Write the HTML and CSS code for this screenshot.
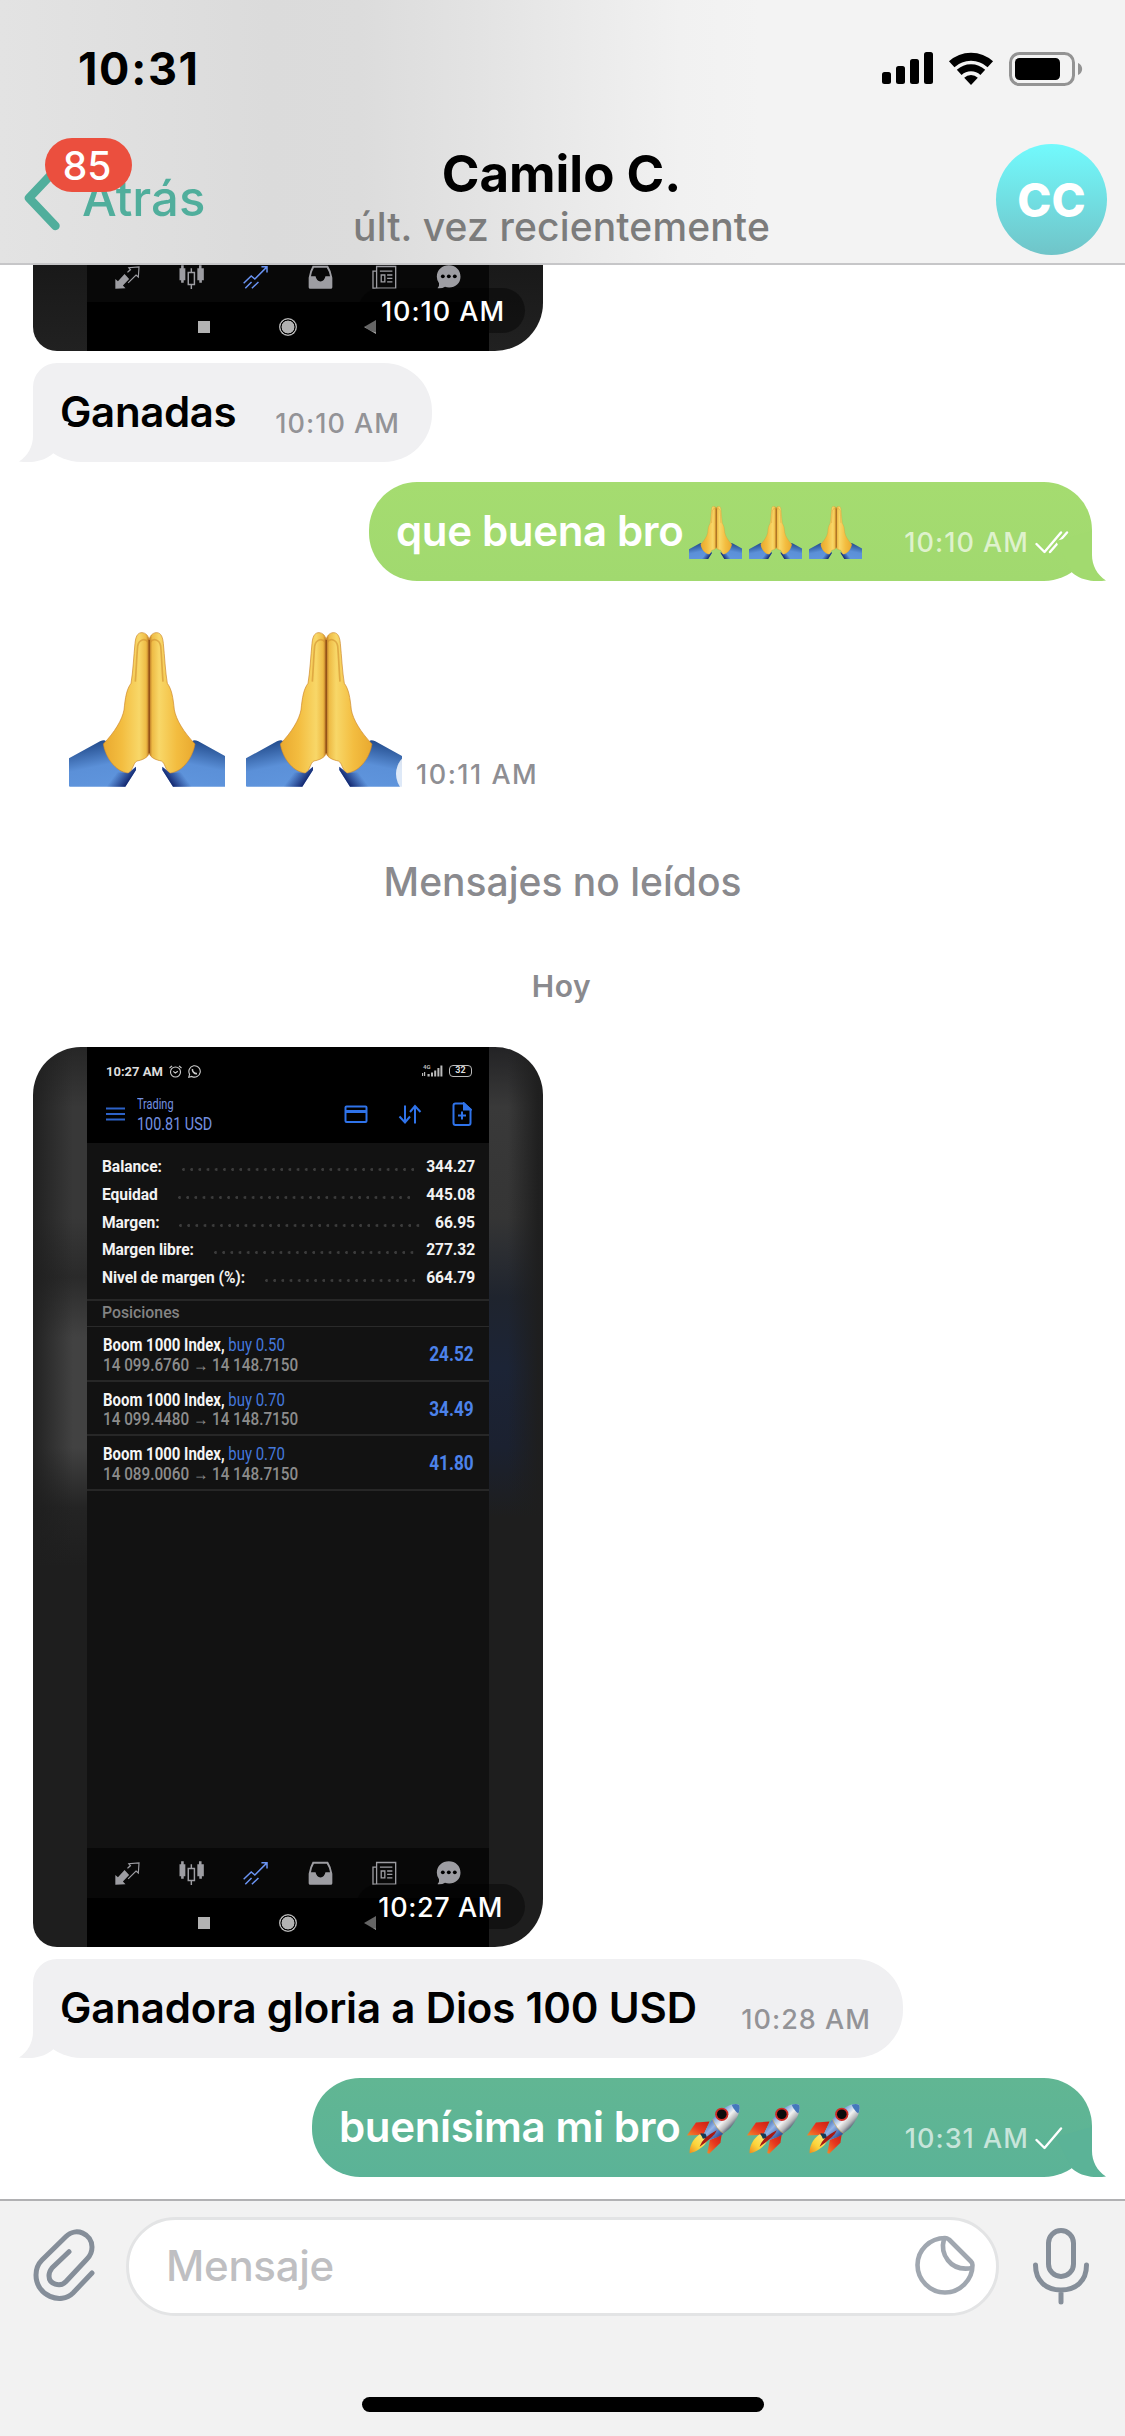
FILE: index.html
```html
<!DOCTYPE html>
<html lang="es">
<head>
<meta charset="utf-8">
<title>Camilo C.</title>
<link rel="stylesheet" href="styles.css">
</head>
<body>
<svg class="defs" width="0" height="0" aria-hidden="true">
  <defs>
    <linearGradient id="hand" x1="0" x2="1"><stop offset="0" stop-color="#e9a92f"/><stop offset=".4" stop-color="#f3bd40"/><stop offset=".78" stop-color="#f8d768"/><stop offset=".93" stop-color="#eebb45"/><stop offset="1" stop-color="#b0691f"/></linearGradient>
    <linearGradient id="cuff" x1=".3" y1="0" x2=".6" y2="1"><stop offset="0" stop-color="#1d4585"/><stop offset=".55" stop-color="#5b90d8"/><stop offset="1" stop-color="#5f95dd"/></linearGradient>
    <linearGradient id="cuffEnd" x1="0" y1="0" x2="1" y2=".45"><stop offset=".45" stop-color="#0a1f6b" stop-opacity="0"/><stop offset="1" stop-color="#07155c"/></linearGradient>
    <linearGradient id="hull" gradientUnits="userSpaceOnUse" x1="95" y1="88" x2="145" y2="138"><stop offset="0" stop-color="#3f6fb4"/><stop offset=".3" stop-color="#9dbce4"/><stop offset=".55" stop-color="#f2f2f2"/><stop offset=".8" stop-color="#b4b6b8"/><stop offset="1" stop-color="#4d5a70"/></linearGradient>
    <linearGradient id="hullBase" gradientUnits="userSpaceOnUse" x1="75" y1="112" x2="118" y2="155"><stop offset="0" stop-color="#3664ae"/><stop offset=".45" stop-color="#94b4e6"/><stop offset="1" stop-color="#2f559c"/></linearGradient>
    <linearGradient id="fin" x1="0" y1="1" x2="1" y2="0"><stop offset="0" stop-color="#f08a2c"/><stop offset=".5" stop-color="#e8381f"/><stop offset="1" stop-color="#c92013"/></linearGradient>
    <linearGradient id="flame" x1="0" y1="1" x2="1" y2="0"><stop offset="0" stop-color="#ee8a1d"/><stop offset=".4" stop-color="#fbd53c"/><stop offset="1" stop-color="#fdf08a"/></linearGradient>
    <g id="pray-half">
      <path fill="url(#cuff)" d="M27 415 L120 364 Q134 357 138 364 L134 385 C145 425 170 450 205 459 L228 440 V450 L196 500 H30 Q27 500 27 497Z"/>
      <path fill="url(#cuffEnd)" d="M150 455 L205 459 L228 440 V450 L196 500 H130Z"/>
      <path fill="url(#hand)" stroke="#cb872a" stroke-width="2" d="M268 60 C264 42 252 37 243 38 C232 40 227 50 225 70 C221 110 219 155 213 190 C200 208 196 230 192 270 C186 300 165 335 130 372 C136 410 165 455 204 459 C220 452 219 428 231 423 C246 420 264 414 268 398Z"/>
      <path fill="none" stroke="#d0902f" stroke-width="5" stroke-opacity=".6" d="M226 185 C229 145 230 110 233 78 C237 58 255 54 264 66"/>
    </g>
    <symbol id="pray" viewBox="27 36 468 465" preserveAspectRatio="none">
      <use href="#pray-half"/><use href="#pray-half" transform="translate(535 0) scale(-1 1)"/>
      <path stroke="#7d3f12" stroke-width="3" d="M267.500 60V400"/>
    </symbol>
    <symbol id="rocket" viewBox="22 50 160 158">
      <path fill="url(#fin)" d="M22 150 L49 111 L90 108 L72 148Z"/>
      <path fill="url(#fin)" d="M127 145 L123 172 L89 205 L83 203 L92 160Z"/>
      <path fill="url(#hull)" d="M179 57 C160 50 135 62 108 90 C95 105 84 122 73 146 L90 164 C115 156 145 140 160 118 C178 92 184 72 179 57Z"/>
      <path fill="url(#hullBase)" d="M99 100 Q108 128 133 145 Q112 158 90 164 L73 146 Q83 120 99 100Z"/>
      <path fill="#4478bb" d="M179 57 C173 54 163 55 157 57 Q162 72 177 84 C182 72 182 62 179 57Z"/>
      <path fill="none" stroke="#d2a94c" stroke-width="2" d="M99 100 Q108 128 133 145"/>
      <path fill="url(#flame)" d="M60 146 C40 160 28 184 30 204 C48 200 75 186 84 164Z"/>
      <path fill="#153a58" d="M62 143 L78 145 L83 158 L70 160Z"/>
      <path fill="#a81a14" d="M60 184 Q68 156 112 134 Q106 152 60 184Z"/>
      <circle cx="127" cy="86" r="20" fill="#cf2a25"/><circle cx="127" cy="86" r="14.500" fill="#0c0a0c"/>
    </symbol>
    <symbol id="tail" viewBox="0 0 60 50"><path fill="currentColor" d="M46 0V24C46 34 51 44 60 49.500C48 51.500 34 49 26 41.500L10 10Z"/></symbol>

    <symbol id="t-trade" viewBox="44 46 76 72"><path fill="#9d9da2" d="M45 118V88L53 95L73 73L87 88L68 108L76 116Z"/><path fill="none" stroke="#9d9da2" stroke-width="3.500" d="M83 66L91 60L86 54L117 51L115 82L108 76L84 100M91 60L82 68"/></symbol>
    <symbol id="t-candles" viewBox="236 46 76 74"><path fill="#9d9da2" d="M237 56h5v-9h8v9h5v37h-5v8h-8v-8h-5zM292 56h5v-9h8v9h7v37h-6v8h-8v-8h-6z"/><path fill="none" stroke="#9d9da2" stroke-width="4.500" d="M264 69h19v37h-19zM273.500 56v12M273.500 107v13"/></symbol>
    <symbol id="t-trend" viewBox="428 46 76 72"><path fill="none" stroke="#6a93f2" stroke-width="4.500" d="M430 101L453 79L464 88L500 52M484 51H501V68M435 116L454 97M455 116L475 97"/></symbol>
    <symbol id="t-inbox" viewBox="622 46 76 72"><path fill="#9d9da2" fill-rule="evenodd" d="M636 48H683Q692 62 696 84V113Q696 118 691 118H629Q624 118 624 113V84Q628 62 636 48ZM640 54Q633 66 631 80H645Q648 95 660 96Q672 95 675 80H689Q687 66 679 54Z"/></symbol>
    <symbol id="t-news" viewBox="814 46 76 72"><path fill="none" stroke="#9d9da2" stroke-width="4" d="M828 50H886V116H828ZM828 64H817V116H830"/><path fill="none" stroke="#9d9da2" stroke-width="4" d="M838 64H876M842 76H853V97H842ZM860 76H876M860 86H876M860 97H876"/></symbol>
    <symbol id="t-chat" viewBox="1006 44 78 76"><path fill="#9d9da2" d="M1046 45C1067 45 1083 60 1083 81S1067 115 1047 115Q1040 115 1034 113Q1026 119 1010 118Q1017 111 1015 102Q1008 93 1008 81C1008 60 1025 45 1046 45Z"/><circle cx="1027" cy="80" r="6"/><circle cx="1046" cy="80" r="6"/><circle cx="1065" cy="80" r="6"/></symbol>
  </defs>
</svg>

<div class="screen">
  <header class="header">
    <div class="status">
      <span class="clock">10:31</span>
      <div class="status-icons">
        <svg width="51" height="33" viewBox="0 0 51 33"><rect y="20" width="9" height="12" rx="2.500"/><rect x="14" y="14" width="9" height="18" rx="2.500"/><rect x="28" y="7" width="9" height="25" rx="2.500"/><rect x="42" width="9" height="32" rx="2.500"/></svg>
        <svg width="46" height="33" viewBox="0 0 46 33"><path d="M3.700 12.300A28.300 28.300 0 0 1 42.300 12.300" fill="none" stroke="#000" stroke-width="8"/><path d="M11.200 20.400A17.300 17.300 0 0 1 34.800 20.400" fill="none" stroke="#000" stroke-width="7"/><path d="M16.200 25.700A10 10 0 0 1 29.800 25.700L23 33Z"/></svg>
        <svg width="74" height="34" viewBox="0 0 74 34"><rect x="1.500" y="1.500" width="63" height="31" rx="9" fill="none" stroke="#939393" stroke-width="3"/><rect x="6" y="6" width="45" height="22" rx="4.500"/><path fill="#939393" d="M69 11C74.500 13 74.500 21 69 23Z"/></svg>
      </div>
    </div>
    <div class="nav">
      <div class="back">
        <svg class="chevron" width="36" height="66" viewBox="0 0 36 66"><path d="M31.500 5L5 33L31.500 61" fill="none" stroke="currentColor" stroke-width="8.500" stroke-linecap="round" stroke-linejoin="round"/></svg>
        <span class="back-label">Atrás</span>
        <span class="badge">85</span>
      </div>
      <div class="peer">
        <div class="peer-name">Camilo C.</div>
        <div class="peer-seen">últ. vez recientemente</div>
      </div>
      <div class="peer-photo"><div class="avatar">CC</div></div>
    </div>
  </header>

  <main class="chat">
    <div class="media media-cut">
      <div class="phone">
        <div class="tabs">
          <svg><use href="#t-trade"/></svg><svg><use href="#t-candles"/></svg><svg><use href="#t-trend"/></svg><svg><use href="#t-inbox"/></svg><svg><use href="#t-news"/></svg><svg><use href="#t-chat"/></svg>
        </div>
        <div class="softkeys"><i class="key-square"></i><i class="key-home"></i><i class="key-back"></i></div>
      </div>
      <span class="media-time">10:10 AM</span>
    </div>

    <div class="bubble in w-ganadas">
      <span class="text">Ganadas</span><span class="time">10:10 AM</span>
      <svg class="tail"><use href="#tail"/></svg>
    </div>

    <div class="bubble out light">
      <span class="text">que buena bro</span>
      <span class="emojis"><svg><use href="#pray"/></svg><svg><use href="#pray"/></svg><svg><use href="#pray"/></svg></span>
      <span class="time">10:10 AM</span>
      <svg class="check" width="34" height="24" viewBox="0 0 34 24"><path d="M1.500 13L9.500 21L26 1.500M15 21L32 1.500" fill="none" stroke="#fff" stroke-width="2.400" stroke-linecap="round" stroke-linejoin="round"/></svg>
      <svg class="tail"><use href="#tail"/></svg>
    </div>

    <div class="jumbo">
      <svg><use href="#pray"/></svg><svg><use href="#pray"/></svg>
      <span class="jumbo-time">10:11 AM</span>
    </div>

    <div class="unread">Mensajes no leídos</div>
    <div class="day">Hoy</div>

    <div class="media media-full">
      <div class="phone">
        <div class="p-status">
          <span class="p-clock">10:27 AM</span>
          <svg width="13" height="13" viewBox="0 0 13 13" fill="none" stroke="#ccc" stroke-width="1.100"><circle cx="6.500" cy="7" r="5"/><path d="M.5 3L3 .8M10 .8L12.500 3M4.300 6.300L6.300 8L8.800 6.300"/></svg>
          <svg width="13" height="13" viewBox="0 0 13 13" fill="none" stroke="#ccc" stroke-width="1.100"><path d="M.8 12.200L1.600 9.200A5.700 5.700 0 1 1 3.800 11.400Z"/><path d="M4.500 4C4 6.500 6.500 9 9 8.600" stroke-width="1.600"/></svg>
          <span class="p-right">
            <svg width="22" height="14" viewBox="0 0 22 14" fill="#bbb"><text x="2" y="5" font-size="6" font-weight="700" font-family="Roboto, sans-serif">4G</text><path d="M1 9h1.200v3H1zM3 8h1.200v4H3zM6.500 10h2.200v2.500H6.500zM10 8.500h2v4h-2zM13.200 6.500h2v6h-2zM16.400 4h2v8.500h-2zM19.400 1.500h2v11h-2z"/></svg>
            <span class="p-battery">32</span>
          </span>
        </div>
        <div class="p-bar">
          <svg width="19" height="14" viewBox="0 0 19 14"><path d="M0 1.500H19M0 7H19M0 12.500H19" stroke="#2d62c8" stroke-width="2"/></svg>
          <div class="p-title"><div class="p-sub"><span>Trading</span></div><div class="p-total"><span>100.81 USD</span></div></div>
          <div class="p-actions">
            <svg width="24" height="24" viewBox="0 0 24 24" fill="none" stroke="#2f73ea" stroke-width="2"><rect x="1.500" y="4.500" width="21" height="15.500" rx="1"/><path d="M1 9.500H23" stroke-width="3"/></svg>
            <svg width="24" height="24" viewBox="0 0 24 24" fill="none" stroke="#2f73ea" stroke-width="2"><path d="M7 3.500V20M1.500 14.500L7 20.500L12 14.500M17 21.500V4.500M12 10L17 4L22.500 10"/></svg>
            <svg width="20" height="24" viewBox="0 0 20 24" fill="none" stroke="#2f73ea" stroke-width="2"><path d="M12 1.500H3.500Q1.500 1.500 1.500 3.500V21Q1.500 23 3.500 23H16.500Q18.500 23 18.500 21V7.500ZM6 13.500H14M10 9.500V17.500"/><path d="M12 1.500V7.500H18.500Z" fill="#2f73ea"/></svg>
          </div>
        </div>
        <div class="p-summary">
          <div class="p-row"><span>Balance:</span><i></i><span>344.27</span></div>
          <div class="p-row"><span>Equidad</span><i></i><span>445.08</span></div>
          <div class="p-row"><span>Margen:</span><i></i><span>66.95</span></div>
          <div class="p-row"><span>Margen libre:</span><i></i><span>277.32</span></div>
          <div class="p-row"><span>Nivel de margen (%):</span><i></i><span>664.79</span></div>
        </div>
        <div class="p-section">Posiciones</div>
        <div class="p-pos"><div class="p-info"><div class="p-sym"><span><b>Boom 1000 Index,</b> buy 0.50</span></div><div class="p-price"><span>14 099.6760 → 14 148.7150</span></div></div><div class="p-gain"><span>24.52</span></div></div>
        <div class="p-pos"><div class="p-info"><div class="p-sym"><span><b>Boom 1000 Index,</b> buy 0.70</span></div><div class="p-price"><span>14 099.4480 → 14 148.7150</span></div></div><div class="p-gain"><span>34.49</span></div></div>
        <div class="p-pos"><div class="p-info"><div class="p-sym"><span><b>Boom 1000 Index,</b> buy 0.70</span></div><div class="p-price"><span>14 089.0060 → 14 148.7150</span></div></div><div class="p-gain"><span>41.80</span></div></div>
        <div class="p-space"></div>
        <div class="tabs">
          <svg><use href="#t-trade"/></svg><svg><use href="#t-candles"/></svg><svg><use href="#t-trend"/></svg><svg><use href="#t-inbox"/></svg><svg><use href="#t-news"/></svg><svg><use href="#t-chat"/></svg>
        </div>
        <div class="softkeys"><i class="key-square"></i><i class="key-home"></i><i class="key-back"></i></div>
      </div>
      <span class="media-time wide">10:27 AM</span>
    </div>

    <div class="bubble in w-gloria">
      <span class="text">Ganadora gloria a Dios 100 USD</span><span class="time">10:28 AM</span>
      <svg class="tail"><use href="#tail"/></svg>
    </div>

    <div class="bubble out teal">
      <span class="text">buenísima mi bro</span>
      <span class="emojis"><svg><use href="#rocket"/></svg><svg><use href="#rocket"/></svg><svg><use href="#rocket"/></svg></span>
      <span class="time">10:31 AM</span>
      <svg class="check" width="34" height="24" viewBox="0 0 34 24"><path d="M1.500 13L9.500 21L26 1.500" fill="none" stroke="#fff" stroke-width="2.400" stroke-linecap="round" stroke-linejoin="round"/></svg>
      <svg class="tail"><use href="#tail"/></svg>
    </div>
  </main>

  <footer class="composer">
    <div class="compose-row">
      <svg class="clip" width="68" height="76" viewBox="0 0 68 76"><path d="M62 47L43 67C31 79 6 70 6 49C6 42 8 38 12 34L36 10.500C46 .5 62 8 62 21C62 27 60 30 57 33L36 55.500C30 62 19 58 19 50C19 46.500 20 44.500 22 42L39 25.700" fill="none" stroke="#858e99" stroke-width="5" stroke-linecap="round"/></svg>
      <div class="field"><span>Mensaje</span>
        <svg width="60" height="60" viewBox="0 0 60 60" fill="none" stroke="#a0a7b0" stroke-width="4.600" stroke-linejoin="round"><path d="M30 3C15 3 2.500 15 2.500 30S15 57.500 30 57.500S57.500 45 57.500 30Q57.500 28 56 26.500L34 4.500Q32 3 30 3Z"/><path d="M29 4C25 18 34 37 57 33"/></svg>
      </div>
      <svg class="mic" width="60" height="80" viewBox="0 0 60 80" fill="none" stroke="#858e99" stroke-width="5" stroke-linecap="round"><rect x="17.500" y="4.500" width="25" height="46" rx="12.500"/><path d="M4.500 39C4.500 55 15 64 30 64S55.500 55 55.500 39M30 64V76"/></svg>
    </div>
    <div class="home"></div>
  </footer>
</div>
</body>
</html>
```
FILE: styles.css
```css
* { box-sizing: border-box; }
body { margin: 0; background: #fff; font-family: Inter, "Liberation Sans", sans-serif; color: #000; }
svg { display: block; flex: none; }
.defs { position: absolute; }
.screen { width: 1125px; height: 2436px; display: flex; flex-direction: column; overflow: hidden; }

/* header */
.header {
  height: 265px; border-bottom: 2px solid #c6c6c8;
  background: linear-gradient(90deg, #e3e3e3 0, #dbdbdb 270px, #dcdcdc 360px, #e3e3e3 480px, #ebebeb 590px, #f1f1f1 680px, #f3f3f3 760px);
}
.status { height: 137px; padding: 0 42px 0 78px; display: flex; justify-content: space-between; align-items: center; }
.clock { font-size: 45px; font-weight: 700; line-height: 54px; letter-spacing: 1.7px; }
.status-icons { display: flex; align-items: center; gap: 15px; }
.nav { height: 126px; display: flex; align-items: center; justify-content: space-between; padding: 0 18px 0 24px; }
.back { width: 200px; height: 126px; display: flex; align-items: center; position: relative; color: #50ae9c; }
.chevron { margin-top: -4px; }
.back-label { font-size: 49px; font-weight: 530; line-height: 60px; margin: -3px 0 0 22px; }
.badge {
  position: absolute; left: 21px; top: 1px; width: 87px; height: 54px; border-radius: 27px;
  background: #eb4f3e; color: #fff; font-size: 39px; font-weight: 500; line-height: 56px; text-align: center; padding-right: 3px;
}
.peer { text-align: center; height: 126px; padding-top: 6px; width: 480px; }
.peer-name { font-size: 51px; font-weight: 700; line-height: 61px; }
.peer-seen { font-size: 39px; font-weight: 530; line-height: 46px; color: #7c7c7c; letter-spacing: .15px; }
.peer-photo { width: 208px; display: flex; justify-content: flex-end; }
.avatar {
  width: 111px; height: 111px; border-radius: 50%; margin-top: -1px; display: flex; align-items: center; justify-content: center;
  background: linear-gradient(#72fafd, #70c4c8); color: #fff; font-size: 46px; font-weight: 800;
}

/* chat */
.chat { height: 1934px; display: flex; flex-direction: column; }
.media { width: 510px; margin-left: 33px; position: relative; overflow: hidden; display: flex; justify-content: center; flex: none; background: #1e1e1e; }
.media-cut { height: 86px; border-radius: 0 0 48px 24px; align-items: flex-end; background: linear-gradient(#191919, #212121); }
.media-full {
  height: 900px; border-radius: 48px 48px 48px 24px; margin-top: 37px;
  background:
    linear-gradient(90deg, rgba(30,30,30,.9) 0, rgba(30,30,30,0) 40px, rgba(30,30,30,0) 475px, rgba(30,30,30,.95) 505px),
    linear-gradient(#262626 0, #383838 60px, #383838 170px, #2a2a2a 230px, #424242 290px, #424242 400px, #242424 460px, #1e1e1e 520px, #1e1e1e 900px) 0 0 / 60px 100% no-repeat,
    linear-gradient(#232325 0, #393939 60px, #353535 170px, #1f242e 250px, #1c2436 320px, #1b2130 400px, #1e1e1e 470px, #1e1e1e 900px) 100% 0 / 60px 100% no-repeat,
    #1e1e1e;
}
.media-time {
  position: absolute; right: 18px; bottom: 18px; width: 167px; height: 45px; border-radius: 23px;
  background: rgba(0,0,0,.4); color: #fff; font-size: 27px; font-weight: 530; line-height: 47px; letter-spacing: .95px; text-align: right; padding-right: 20px;
}
.media-time.wide { width: 169px; padding-right: 22px; letter-spacing: .6px; }
.phone { width: 402px; display: flex; flex-direction: column; background: #121212; font-family: Roboto, sans-serif; }
.tabs { height: 50px; padding: 0 8px; background: #080808; display: grid; grid-template-columns: repeat(6, 1fr); place-items: center; }
.tabs svg { width: 25px; height: 24px; }
.softkeys { height: 49px; background: #000; display: flex; align-items: center; padding-left: 111px; }
.key-square { width: 12px; height: 12px; background: #b2b2b2; }
.key-home { width: 18px; height: 18px; margin-left: 69px; border-radius: 50%; background: radial-gradient(#b2b2b2 6.200px, #000 6.700px, #000 7.300px, #b2b2b2 7.800px); }
.key-back { margin-left: 67px; border: solid transparent; border-width: 7px 12px 7px 0; border-right-color: #a8a8a8; }

.bubble { height: 99px; flex: none; position: relative; display: flex; align-items: center; }
.text { font-size: 42px; font-weight: 560; line-height: 50px; white-space: nowrap; margin-top: -1px; letter-spacing: -.15px; }
.time { font-size: 27px; font-weight: 500; line-height: 33px; margin-top: 22px; margin-left: auto; color: #939397; white-space: nowrap; letter-spacing: 1.05px; }
.tail { position: absolute; bottom: 0; width: 60px; height: 50px; }
.in { background: #f0f0f2; border-radius: 24px 48px 48px 48px; margin-left: 33px; padding: 0 32px 0 27px; }
.in .tail { left: -14px; color: #f0f0f2; transform: scaleX(-1); }
.w-ganadas { width: 399px; margin-top: 12px; }
.w-ganadas .text { letter-spacing: -.35px; }
.w-gloria { width: 870px; margin-top: 12px; }
.out { border-radius: 48px; align-self: flex-end; margin: 20px 33px 0 0; padding: 0 23px 0 27px; color: #fff; }
.out .text { letter-spacing: -.35px; }
.out .tail { right: -14px; }
.out .time { color: rgba(255,255,255,.66); }
.light { width: 723px; background: linear-gradient(#a5dc70, #a1d96f); }
.light .tail { color: #a2da6f; }
.teal { width: 780px; background: linear-gradient(#61b693, #5bb397); }
.teal .tail { color: #5bb397; }
.emojis { display: flex; gap: 7px; position: absolute; right: 230px; top: 24px; }
.teal .emojis { right: 232px; }
.emojis svg { width: 53px; height: 53px; }
.check { margin: 23px 0 0 6px; }

.jumbo { height: 155px; margin: 51px 0 0 69px; display: flex; gap: 21px; position: relative; flex: none; }
.jumbo svg { width: 156px; height: 155px; }
.jumbo-time {
  position: absolute; left: 327px; bottom: -10px; height: 46px; width: 162px; border-radius: 23px; background: rgba(255,255,255,.8);
  color: #8e8e93; font-size: 27px; font-weight: 500; line-height: 47px; padding-left: 20px; letter-spacing: 1.5px; white-space: nowrap;
}
.unread { margin-top: 71px; text-align: center; font-size: 39px; font-weight: 550; line-height: 48px; color: #8a8a8e; }
.day { margin: 59px 0 3px; padding-right: 2px; text-align: center; font-size: 30px; font-weight: 600; line-height: 42px; letter-spacing: .6px; color: #8a8a8e; }

/* trading screenshot */
.p-status { height: 48px; background: #000; color: #ddd; display: flex; align-items: center; gap: 6px; padding: 0 17px 0 19px; }
.p-clock { font-size: 13px; font-weight: 700; }
.p-right { margin-left: auto; display: flex; align-items: center; gap: 6px; }
.p-battery { width: 23px; height: 12px; border: 1.500px solid #bbb; border-radius: 4px; font-size: 9px; font-weight: 700; line-height: 9px; text-align: center; }
.p-bar { height: 48px; background: #000; display: flex; padding: 0 17px 0 19px; }
.p-bar > svg { margin-top: 12px; }
.p-title { margin-left: 12px; color: #7390e0; white-space: nowrap; }
.p-title span, .p-info span, .p-gain span { display: inline-block; transform-origin: 0 50%; }
.p-sub { font-size: 14px; line-height: 19px; height: 16px; }
.p-sub span { transform: scaleX(.78); }
.p-total { font-size: 18px; line-height: 25px; }
.p-total span { transform: scaleX(.8); }
.p-actions { margin: 7px 0 0 auto; display: flex; gap: 30px; }
.p-summary { padding: 11px 14px 0 15px; height: 156px; color: #f2f2f2; }
.p-row { display: flex; height: 27.750px; font-size: 15.600px; font-weight: 700; line-height: 26px; letter-spacing: -.08px; }
.p-row i { flex: 1; margin: 14px 11px 0 20px; height: 3px; background: radial-gradient(circle at 1.500px 1.500px, #3c3c3c 1.200px, transparent 1.600px) 0 0 / 8.200px 3px repeat-x; }
.p-section { height: 28px; border-top: 2px solid #272727; border-bottom: 1px solid #2a2a2a; padding-left: 15px; font-size: 15.800px; font-weight: 500; line-height: 23px; color: #838383; }
.p-pos { height: 54.500px; border-bottom: 2px solid #272727; padding: 8px 15px 0 16px; display: flex; justify-content: space-between; white-space: nowrap; }
.p-info { width: 210px; }
.p-sym { font-size: 18px; line-height: 19px; color: #4478dc; height: 19.500px; }
.p-sym b { font-weight: 700; color: #f5f5f5; }
.p-sym span { transform: scaleX(.83); }
.p-price { font-size: 18px; line-height: 19px; color: #8c8c8c; font-weight: 500; }
.p-price span { transform: scaleX(.848); }
.p-gain { font-size: 20px; font-weight: 700; line-height: 38px; color: #4c82ea; }
.p-gain span { transform: scaleX(.86); transform-origin: 100% 50%; }
.p-space { flex: 1; }

/* composer */
.composer { flex: 1; background: #f2f2f2; border-top: 2px solid #b1b1b3; }
.compose-row { display: flex; align-items: flex-start; padding: 16px 34px 0 30px; }
.clip { margin-top: 9px; }
.field {
  width: 873px; height: 99px; margin-left: 28px; border: 3px solid #e3e4e5; border-radius: 50px; background: #fff;
  display: flex; align-items: center; justify-content: space-between; padding: 0 21px 3px 37px; font-size: 42px; font-weight: 530; letter-spacing: -.3px; color: #bfbfc2;
}
.mic { margin: 9px 0 0 32px; }
.home { width: 402px; height: 15px; border-radius: 8px; background: #000; margin: 81px auto 0; }
```
